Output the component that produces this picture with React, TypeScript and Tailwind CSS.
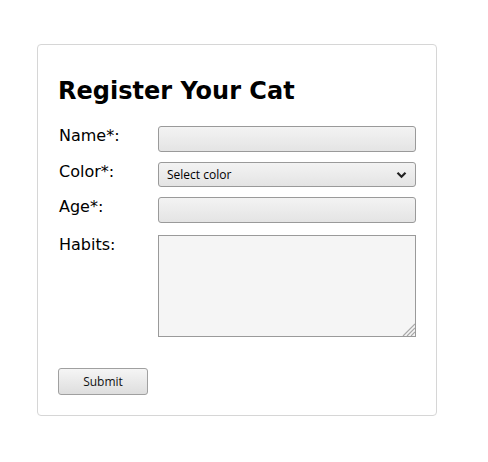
import React from "react";

const inputCls =
  "block w-[258px] border border-[#9a9a9a] rounded-[3px] bg-[linear-gradient(#f3f3f3,#e4e4e4)]";

export default function App() {
  return (
    <div className="w-[488px] h-[462px] bg-white pt-[44px] pl-[37px]">
      <div className="w-[400px] h-[372px] border border-[#d6d6d6] rounded-[4px] pl-[21px] pt-[31px] text-black [font-family:'DejaVu_Sans',sans-serif]">
        <h2 className="text-[24px] font-bold leading-[30px] m-0 ml-[-1px]">Register Your Cat</h2>
        <div className="mt-[20px] flex flex-col">
          <div className="flex items-start">
            <label className="w-[99px] text-[16px] leading-[20px] pt-[0px]">Name*:</label>
            <div className={`${inputCls} h-[26px]`} />
          </div>
          <div className="flex items-start mt-[10px]">
            <label className="w-[99px] text-[16px] leading-[20px]">Color*:</label>
            <div
              className={`${inputCls} h-[25px] flex items-center justify-between pl-[8px] pr-[8px] text-[12px] [font-family:'Open_Sans',sans-serif]`}
            >
              <span>Select color</span>
              <svg width="11" height="8" viewBox="0 0 11 8">
                <path d="M1.5 1.8 L5.5 5.8 L9.5 1.8" stroke="#222" strokeWidth="2.2" fill="none" />
              </svg>
            </div>
          </div>
          <div className="flex items-start mt-[10px]">
            <label className="w-[99px] text-[16px] leading-[20px]">Age*:</label>
            <div className={`${inputCls} h-[26px]`} />
          </div>
          <div className="flex items-start mt-[12px]">
            <label className="w-[99px] text-[16px] leading-[20px]">Habits:</label>
            <div className="relative w-[258px] h-[102px] border border-[#9a9a9a] bg-[#f5f5f5]">
              <svg className="absolute right-0 bottom-0" width="13" height="13" viewBox="0 0 13 13">
                <path d="M13 1 L1 13 M13 5 L5 13 M13 9 L9 13" stroke="#a8a8a8" strokeWidth="1.2" />
              </svg>
            </div>
          </div>
        </div>
        <button className="mt-[31px] w-[90px] h-[27px] border border-[#a0a0a0] rounded-[3px] bg-[linear-gradient(#f5f5f5,#dedede)] text-[12px] text-[#111] [font-family:'Open_Sans',sans-serif] ml-[-1px]">
          Submit
        </button>
      </div>
    </div>
  );
}
